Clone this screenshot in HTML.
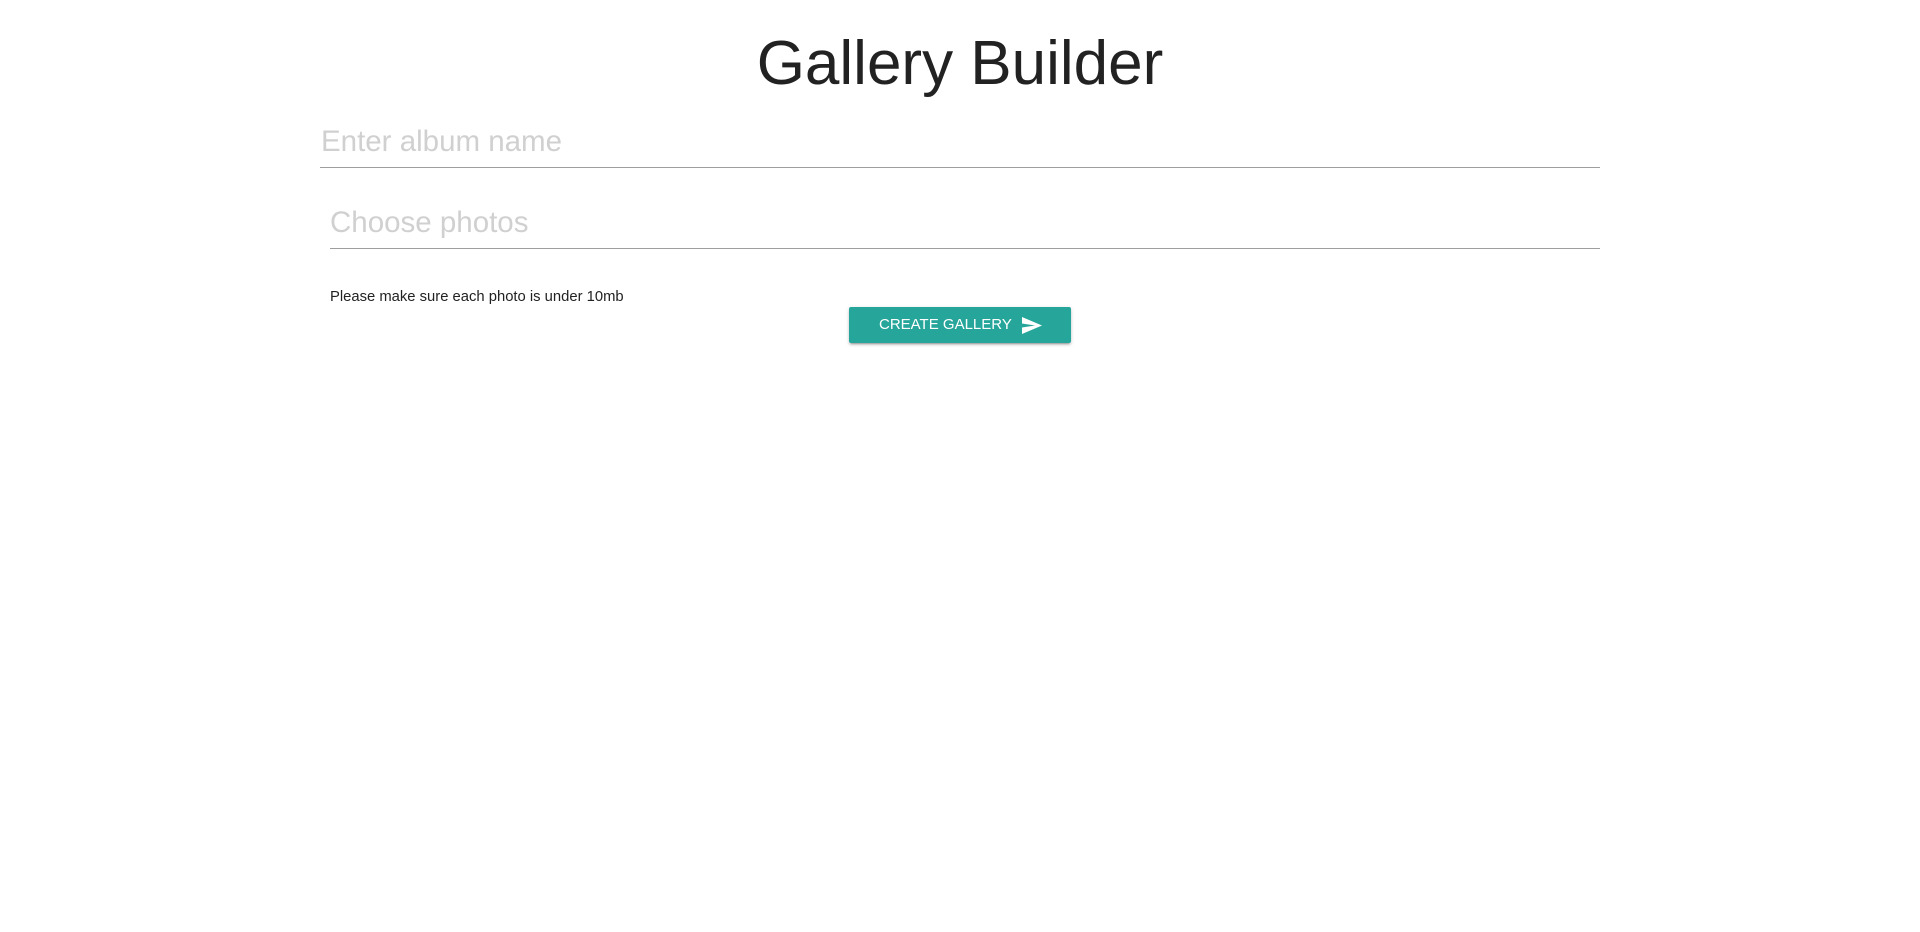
<!DOCTYPE html>
<html><head><meta charset="utf-8"><style>
html,body{margin:0;padding:0;background:#fff;width:1920px;height:932px;overflow:hidden;font-family:"Liberation Sans",Arial,sans-serif}
.a{position:absolute;white-space:nowrap}
</style></head><body>
<div class="a" style="left:0;width:1920px;text-align:center;top:24px;font-size:62px;line-height:80px;color:#222">Gallery Builder</div>
<div class="a" style="left:321px;top:122px;font-size:29.5px;line-height:40px;color:#d0d0d0">Enter album name</div>
<div class="a" style="left:320px;top:167px;width:1280px;height:1px;background:#9e9e9e"></div>
<div class="a" style="left:330px;top:203px;font-size:29.5px;line-height:40px;color:#d0d0d0">Choose photos</div>
<div class="a" style="left:330px;top:248px;width:1270px;height:1px;background:#9e9e9e"></div>
<div class="a" style="left:330px;top:288px;font-size:14.8px;line-height:18px;color:#222">Please make sure each photo is under 10mb</div>
<div class="a" style="left:849px;top:307px;width:222px;height:36px;background:#26a69a;border-radius:2px;box-shadow:0 2px 2px rgba(0,0,0,.14),0 1px 5px rgba(0,0,0,.12),0 3px 1px -2px rgba(0,0,0,.2)">
<span class="a" style="left:30px;top:9px;font-size:15px;line-height:18px;color:#fff">CREATE GALLERY</span>
<svg class="a" style="left:173px;top:10px" width="20" height="17" viewBox="0 0 20 17"><path d="M0 0 L20 8.5 L0 17 L0 10.5 L13 8.5 L0 6.5Z" fill="#fff"/></svg>
</div>
</body></html>
